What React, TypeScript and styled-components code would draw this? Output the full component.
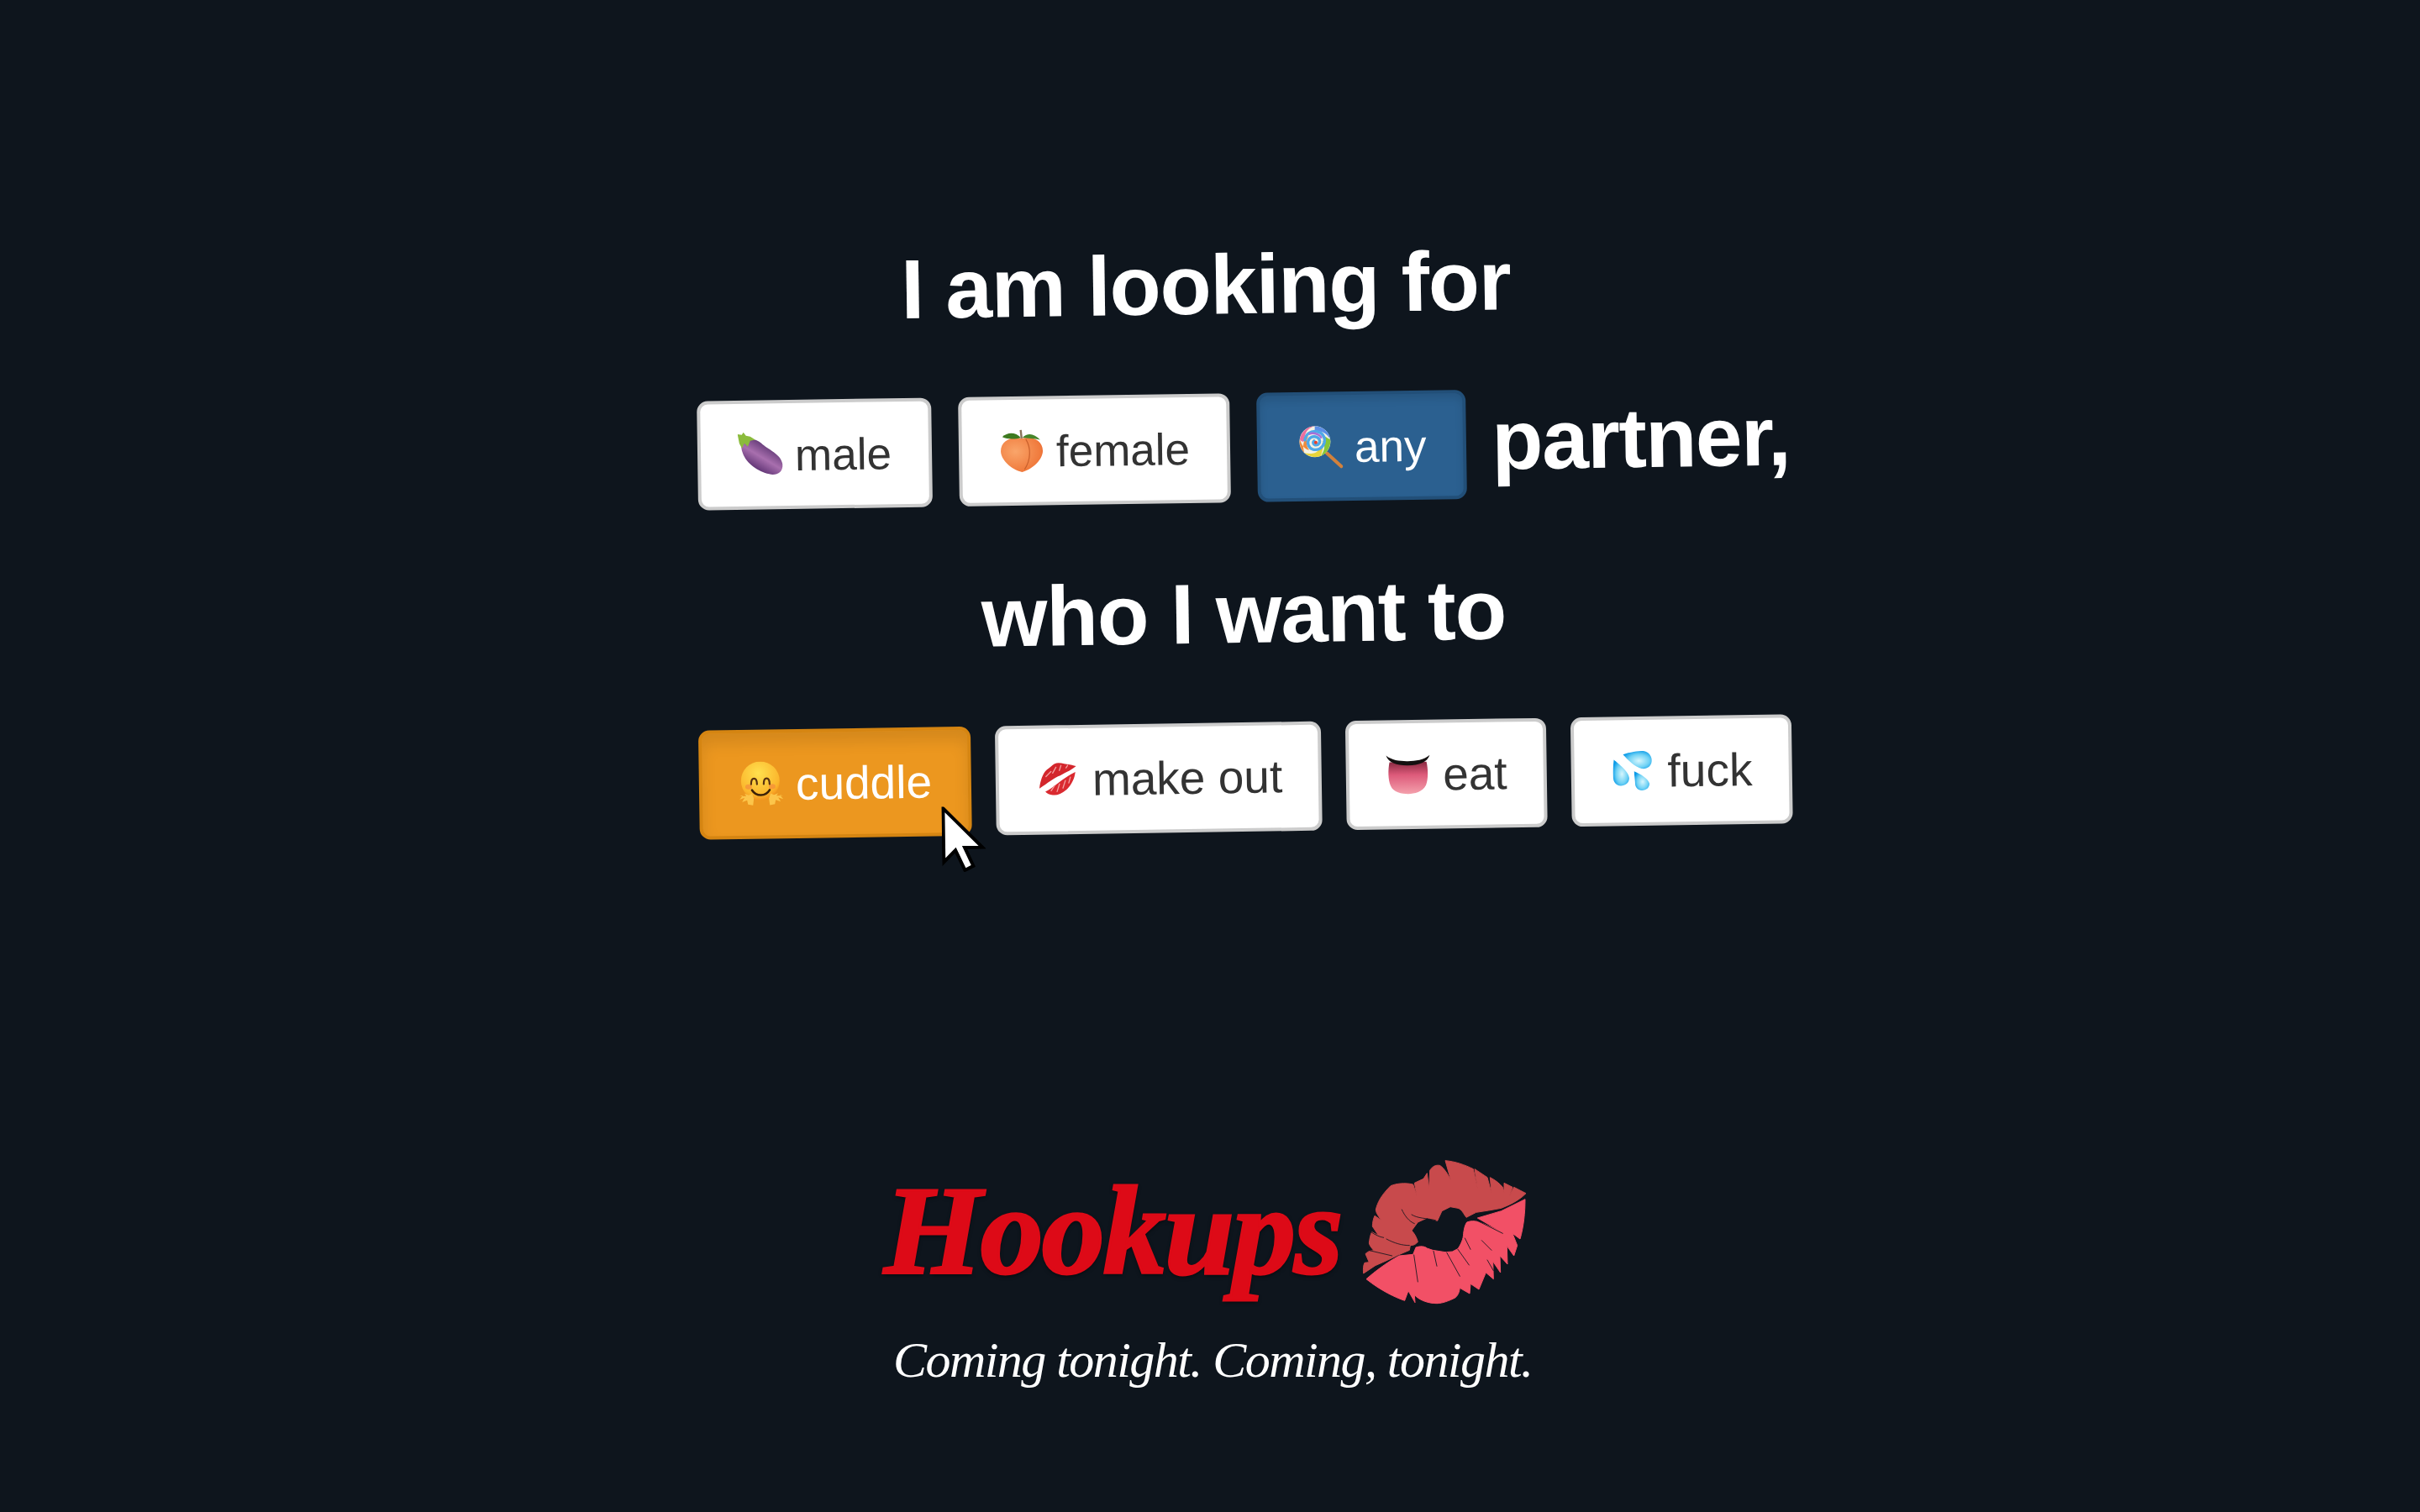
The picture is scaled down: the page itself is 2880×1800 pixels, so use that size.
import styled, { createGlobalStyle } from 'styled-components';
import type { ReactNode } from 'react';

const GlobalStyle = createGlobalStyle`
  html, body {
    margin: 0;
    padding: 0;
    background: #0e151d;
    font-family: "Liberation Sans", Arial, sans-serif;
  }
`;

const Page = styled.div`
  width: 2880px;
  height: 1800px;
  overflow: hidden;
  background: #0e151d;
  display: flex;
  flex-direction: column;
`;

const Stage = styled.main`
  display: flex;
  flex-direction: column;
  padding: 276px 0 0 830px;
  transform: rotate(-0.85deg);
  transform-origin: 1480px 600px;
`;

const Heading = styled.h1<{ $indent: number; $top: number; $size: number }>`
  margin: ${(p) => p.$top}px 0 0 ${(p) => p.$indent}px;
  font-size: ${(p) => p.$size}px;
  line-height: 124px;
  font-weight: 700;
  letter-spacing: -1.2px;
  color: #fff;
`;

const Row = styled.div<{ $gap: number; $size: number; $pad: number; $shift: number }>`
  display: flex;
  align-items: center;
  gap: ${(p) => p.$gap}px;
  margin: 68px 0 0 ${(p) => p.$shift}px;
  font-size: ${(p) => p.$size}px;
  --choice-pad: ${(p) => p.$pad}px;
`;

const Word = styled.span`
  font-size: 100px;
  font-weight: 700;
  letter-spacing: -1.5px;
  color: #fff;
  margin: 0 0 10px -2px;
`;

type Tone = 'plain' | 'blue' | 'orange';

const toneStyles: Record<Tone, string> = {
  plain: 'background:#fff;color:#333;border-color:#ccc;',
  blue: 'background:#2b6090;color:#fff;border-color:#224f78;box-shadow:inset 0 6px 10px rgba(0,0,0,.1);',
  orange: 'background:#ec971f;color:#fff;border-color:#d58512;box-shadow:inset 0 12px 18px rgba(0,0,0,.1);',
};

const Choice = styled.button<{ $tone: Tone }>`
  position: relative;
  display: flex;
  align-items: center;
  gap: 14px;
  height: 130px;
  padding: 0 var(--choice-pad);
  box-sizing: border-box;
  border: 4px solid;
  border-radius: 13px;
  font-family: inherit;
  font-size: inherit;
  ${(p) => toneStyles[p.$tone]}
`;

const Pointer = styled.svg`
  position: absolute;
  left: 284px;
  top: 91px;
  width: 52px;
  height: 78px;
`;

const Logo = styled.footer`
  display: flex;
  flex-direction: column;
`;

const BrandRow = styled.div`
  display: flex;
  align-items: flex-start;
  margin-top: 370px;
  padding-left: 1052px;
`;

const Brand = styled.div`
  width: 548px;
  padding-top: 10px;
  font-family: "Liberation Serif", serif;
  font-style: italic;
  font-weight: 700;
  font-size: 150px;
  line-height: 190px;
  letter-spacing: -2px;
  color: #dd0a17;
  -webkit-text-stroke: 3px #dd0a17;
  text-shadow: 0 2px 5px rgba(0, 0, 0, 0.7);
`;

const Lips = styled.svg`
  width: 240px;
  height: 210px;
`;

const Tagline = styled.div`
  margin: 14px 0 0 1063px;
  font-family: "Liberation Serif", serif;
  font-style: italic;
  font-size: 60px;
  line-height: 70px;
  letter-spacing: -1.55px;
  color: #fff;
  white-space: nowrap;
`;

const Glyph = styled.svg`
  width: 54px;
  height: 54px;
  flex: none;
`;

function Eggplant() {
  return (
    <Glyph viewBox="0 0 54 54">
      <defs>
        <linearGradient id="egg" x1="0.8" y1="0.15" x2="0.3" y2="0.85">
          <stop offset="0" stopColor="#4e2a66" />
          <stop offset="0.55" stopColor="#a86fae" />
          <stop offset="1" stopColor="#5a2f70" />
        </linearGradient>
      </defs>
      <path d="M5 13C11 6 21 7 28 13C36 21 51 26 53 38C54 49 45 52 37 50C24 47 10 37 6 25C4 20 4 16 5 13Z" fill="url(#egg)" />
      <path d="M0 2L5 3L7 0L10 4L15 5L21 9L15 10L12 17L8 13L5 19L2 13Z" fill="#8bbb3c" />
    </Glyph>
  );
}

function Peach() {
  return (
    <Glyph viewBox="8 11 54 54">
      <defs>
        <radialGradient id="peach" cx="0.35" cy="0.4" r="0.8">
          <stop offset="0" stopColor="#f9a56a" />
          <stop offset="0.75" stopColor="#f07a3c" />
          <stop offset="1" stopColor="#e0522a" />
        </radialGradient>
      </defs>
      <path d="M35 63C22 60 10 48 10 38C10 26 22 20 35 23C48 20 60 26 60 38C60 48 48 60 35 63Z" fill="url(#peach)" />
      <path d="M40 24C46 34 46 48 38 60" stroke="#c9602c" strokeWidth="1.2" fill="none" />
      <path d="M34 22C28 15 18 15 12 21C18 24 28 24 34 22Z" fill="#3d7a20" />
      <path d="M36 22C42 16 50 17 57 25C50 23 42 23 36 22Z" fill="#47852a" />
      <path d="M35 23L34 13" stroke="#8a7358" strokeWidth="2.4" />
    </Glyph>
  );
}

function Lollipop() {
  return (
    <Glyph viewBox="10 6 54 54">
      <path d="M45 41L62 57" stroke="#d2813c" strokeWidth="4" strokeLinecap="round" />
      <circle cx="31" cy="27" r="18.5" fill="#f4f2e4" />
      <path d="M31 8.5A18.5 18.5 0 0 1 49 24C44 16 38 14 31 15Z" fill="#5c8fe8" />
      <path d="M49 24A18.5 18.5 0 0 1 38 44C42 38 44 32 40 26C42 28 42 22 38 19C44 20 46 24 49 24Z" fill="#85c636" />
      <path d="M38 44A18.5 18.5 0 0 1 18 40C24 42 32 42 36 36C40 32 40 28 40 26C42 36 38 42 38 44Z" fill="#e8d53a" />
      <path d="M18 40A18.5 18.5 0 0 1 13 24C15 30 18 36 24 37C20 32 20 24 24 20C17 24 16 31 18 40Z" fill="#ef8a3c" />
      <path d="M13 24A18.5 18.5 0 0 1 31 8.5C24 10 18 16 19 25C17 28 15 27 13 24Z" fill="#ec6f9f" />
      <path d="M19 25C20 18 26 14 33 15C40 16 44 22 42 29C40 35 34 38 28 36C23 34 21 28 24 24C27 20 33 20 36 24C38 28 35 32 31 31C29 30 28 28 30 26" stroke="#4fa8e8" strokeWidth="3.4" fill="none" strokeLinecap="round" />
      <path d="M24 18C28 16 36 17 39 23" stroke="#a66fd8" strokeWidth="2.4" fill="none" />
      <circle cx="32" cy="28" r="2" fill="#e8402a" />
    </Glyph>
  );
}

function Hug() {
  return (
    <Glyph viewBox="9 9 54 54">
      <defs>
        <radialGradient id="hug" cx="0.45" cy="0.3" r="0.8">
          <stop offset="0" stopColor="#ffe04e" />
          <stop offset="0.7" stopColor="#fbb62c" />
          <stop offset="1" stopColor="#ef7d14" />
        </radialGradient>
      </defs>
      <circle cx="35" cy="32" r="23" fill="url(#hug)" />
      <ellipse cx="21" cy="39" rx="4" ry="3" fill="#f4843c" opacity="0.6" />
      <ellipse cx="49" cy="39" rx="4" ry="3" fill="#f4843c" opacity="0.6" />
      <path d="M24 36C24 27 31 27 31 36M39 36C39 27 46 27 46 36" stroke="#5a3210" strokeWidth="2.2" fill="none" strokeLinecap="round" />
      <path d="M25 43C30 51 41 51 46 43" stroke="#3e2208" strokeWidth="2.6" fill="none" strokeLinecap="round" />
      <path d="M10 50L14 49L10 54L16 52L13 57L19 55L20 60L26 61L27 53L25 47L21 49L16 47L18 50Z" fill="#fcc54a" />
      <path d="M62 50L58 49L62 54L56 52L59 57L53 55L52 60L46 61L45 53L47 47L51 49L56 47L54 50Z" fill="#fcc54a" />
    </Glyph>
  );
}

function Kiss() {
  return (
    <Glyph viewBox="5 7 54 54">
      <path d="M10 44C11 36 14 26 19 22C23 19 25 17 28 15C32 13 36 14 40 15C46 16 50 17 54 18C48 23 42 25 35 29C28 31 20 38 10 44Z" fill="#d3262c" />
      <path d="M17 48C28 43 34 34 53 25C52 33 48 41 42 46C36 51 30 53 26 52C22 52 19 50 17 48Z" fill="#da2a30" />
      <path d="M18 30L24 24M26 26L30 19M34 23L36 17M42 20L44 17M24 47L28 41M31 48L34 39M38 44L41 35M45 38L47 31" stroke="#f2a0a0" strokeWidth="1.3" strokeLinecap="round" />
    </Glyph>
  );
}

function Tongue() {
  return (
    <Glyph viewBox="10 5 54 54">
      <defs>
        <linearGradient id="tongue" x1="0" y1="0" x2="0" y2="1">
          <stop offset="0" stopColor="#8a2a42" />
          <stop offset="0.4" stopColor="#dd5a7a" />
          <stop offset="1" stopColor="#f4a0ac" />
        </linearGradient>
      </defs>
      <path d="M15 17H59C61 26 61 38 58 45C54 53 44 55 37 55C30 55 19 53 16 45C13 38 13 26 15 17Z" fill="url(#tongue)" />
      <path d="M11 9C18 15 28 16 37 16C46 16 56 15 63 9C60 18 50 21 37 21C24 21 14 18 11 9Z" fill="#141010" />
    </Glyph>
  );
}

function Sweat() {
  return (
    <Glyph viewBox="11 10 54 54">
      <defs>
        <radialGradient id="drop" cx="0.55" cy="0.55" r="0.6">
          <stop offset="0" stopColor="#d6f6fd" />
          <stop offset="0.6" stopColor="#6fd2f5" />
          <stop offset="1" stopColor="#0c9be8" />
        </radialGradient>
      </defs>
      <path d="M26 17C34 14 44 13 50 13C57 14 61 20 60 26C59 32 54 35 48 34C40 32 32 24 26 17Z" fill="url(#drop)" />
      <path d="M15 23C21 28 33 38 33 45C33 51 28 54 23 54C17 54 14 49 14 44C14 36 14 30 15 23Z" fill="url(#drop)" />
      <path d="M39 37C46 40 56 46 57 52C57 57 53 60 48 60C43 60 40 56 40 52C40 47 39 42 39 37Z" fill="url(#drop)" />
    </Glyph>
  );
}

function MousePointer() {
  return (
    <Pointer viewBox="0 0 52 78">
      <path d="M2 2V66L16 52L27 76L37 71L27 49H48Z" fill="#fff" stroke="#000" strokeWidth="4" />
    </Pointer>
  );
}

interface ChoiceData {
  label: string;
  icon: ReactNode;
  tone: Tone;
  hovered?: boolean;
}

const partners: ChoiceData[] = [
  { label: 'male', icon: <Eggplant />, tone: 'plain' },
  { label: 'female', icon: <Peach />, tone: 'plain' },
  { label: 'any', icon: <Lollipop />, tone: 'blue' },
];

const wishes: ChoiceData[] = [
  { label: 'cuddle', icon: <Hug />, tone: 'orange', hovered: true },
  { label: 'make out', icon: <Kiss />, tone: 'plain' },
  { label: 'eat', icon: <Tongue />, tone: 'plain' },
  { label: 'fuck', icon: <Sweat />, tone: 'plain' },
];

function renderChoice(item: ChoiceData) {
  return (
    <Choice key={item.label} $tone={item.tone}>
      {item.icon}
      {item.label}
      {item.hovered && <MousePointer />}
    </Choice>
  );
}

function App() {
  return (
    <Page>
      <GlobalStyle />
      <Stage>
        <Heading $indent={246} $top={0} $size={100}>I am looking for</Heading>
        <Row $gap={32} $size={53} $pad={44} $shift={1}>
          {partners.map(renderChoice)}
          <Word>partner,</Word>
        </Row>
        <Heading $indent={336} $top={70} $size={101}>who I want to</Heading>
        <Row $gap={29} $size={55} $pad={43} $shift={-3}>{wishes.map(renderChoice)}</Row>
      </Stage>
      <Logo>
        <BrandRow>
          <Brand>Hookups</Brand>
          <Lips viewBox="0 0 720 630">
            <path
              d="M68 468C66 450 68 438 72 430L88 428L75 398C85 388 95 386 105 386C95 375 90 368 88 360C90 345 92 330 98 320L122 333L100 300C100 285 104 270 108 262L132 278C120 262 112 250 112 240C118 215 130 190 165 155C185 147 215 143 245 150L258 188L250 145L282 130L295 110L302 165L305 100C315 85 325 80 340 82C355 90 370 115 380 135L360 65C395 68 430 80 460 95L475 165L465 95L510 125L525 180L520 125C540 135 555 148 565 160L570 178L570 145L600 160L590 190L605 160L648 182C630 200 610 212 590 222L560 235L515 243L470 250L435 268C425 255 420 240 405 235L378 230L348 245L332 280L295 270L262 285L240 315C250 325 258 340 262 355C255 365 245 368 235 368L232 385L190 403L155 420L110 440Z"
              fill="#c84a4c"
              stroke="#c84a4c"
              strokeWidth="3"
              strokeLinejoin="round"
            />
            <path
              d="M78 488C110 460 150 430 195 405L245 400L255 375C270 370 285 370 295 378L315 385L360 392L385 390L405 380C415 365 425 345 425 325C427 310 430 295 437 285C450 280 465 280 475 283C500 290 540 310 570 325L475 270L560 245L645 203C645 250 640 300 627 345L600 325L617 368L605 405L580 370L582 435L555 405L557 465L530 425L532 488L505 465L480 525L450 505L447 540L412 520C410 535 405 548 395 555C375 565 350 575 330 575C300 575 270 565 250 545L252 572L228 530L215 565C185 555 130 530 78 488Z"
              fill="#f25066"
              stroke="#f25066"
              strokeWidth="3"
              strokeLinejoin="round"
            />
            <g stroke="#0e151d" strokeWidth="2.5" fill="none" strokeLinecap="round">
              <path d="M248 402L262 498" />
              <path d="M318 388L330 442" />
              <path d="M365 393L412 478" />
              <path d="M405 382L445 438" />
              <path d="M430 342L450 382" />
              <path d="M490 350L525 385" />
              <path d="M510 420L532 458" />
              <path d="M475 280L565 325" />
              <path d="M205 240C215 262 230 282 250 290" />
              <path d="M240 258C262 272 290 270 325 278" />
              <path d="M150 345C178 360 205 368 232 368" />
              <path d="M95 320C110 330 125 338 140 340" />
              <path d="M85 385L170 405" />
            </g>
          </Lips>
        </BrandRow>
        <Tagline>Coming tonight. Coming, tonight.</Tagline>
      </Logo>
    </Page>
  );
}

export default App;
